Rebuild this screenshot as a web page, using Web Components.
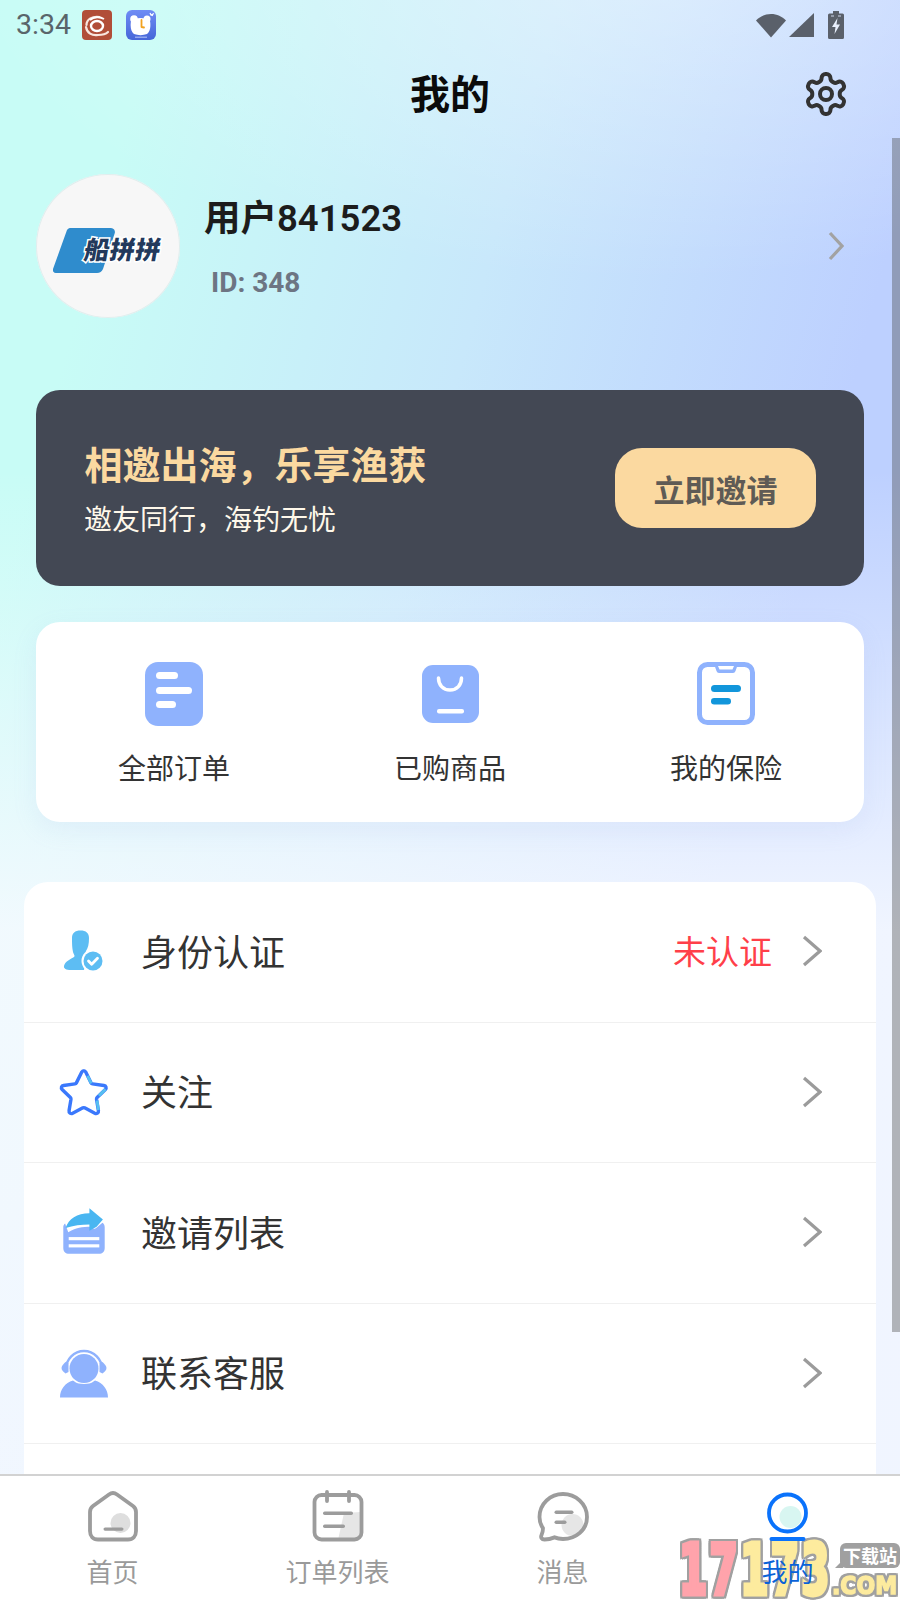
<!DOCTYPE html>
<html lang="zh-CN">
<head>
<meta charset="utf-8">
<title>我的</title>
<style>
html,body{margin:0;padding:0;background:#fff}
body{font-family:Roboto,"Noto Sans CJK SC",sans-serif;width:900px;height:1600px;overflow:hidden}
</style>
</head>
<body>
<app-root>
  <status-bar slot="top"></status-bar>
  <page-header slot="top">我的</page-header>
  <user-profile slot="top" name="用户841523" uid="ID: 348"></user-profile>
  <invite-banner slot="top" heading="相邀出海，乐享渔获" sub="邀友同行，海钓无忧" action="立即邀请"></invite-banner>
  <quick-card slot="top">
    <quick-item label="全部订单">
      <svg width="64" height="64" viewBox="0 0 64 64"><rect x="3" y="0" width="58" height="64" rx="13" fill="#8fb2fd"/><rect x="14" y="10" width="22" height="7" rx="3.5" fill="#fff"/><rect x="14" y="25" width="36" height="7" rx="3.5" fill="#fff"/><rect x="14" y="39" width="20" height="7" rx="3.5" fill="#fff"/></svg>
    </quick-item>
    <quick-item label="已购商品">
      <svg width="64" height="64" viewBox="0 0 64 64"><rect x="4" y="3" width="57" height="58" rx="11" fill="#8fb2fd"/><path d="M20.5 16c0 7 4.5 12 11.5 12s11.500-5 11.500-12" fill="none" stroke="#fff" stroke-width="3.500" stroke-linecap="round"/><rect x="19" y="47" width="27" height="4.500" rx="2" fill="#fff"/></svg>
    </quick-item>
    <quick-item label="我的保险">
      <svg width="64" height="64" viewBox="0 0 64 64"><rect x="5.500" y="2.500" width="53" height="58" rx="8" fill="#fff" stroke="#8fb2fd" stroke-width="5"/><path d="M20 2h24l-2.500 7a3 3 0 0 1-2.500 2H25a3 3 0 0 1-2.500-2z" fill="#8fb2fd"/><path d="M24 4h16l-1.500 3.500h-13z" fill="#fff"/><rect x="17" y="23" width="30" height="7" rx="3.500" fill="#1296db"/><rect x="17" y="36" width="20" height="6.500" rx="3.200" fill="#1296db"/></svg>
    </quick-item>
  </quick-card>
  <menu-list slot="top">
    <menu-row label="身份认证" status="未认证">
      <svg width="60" height="60" viewBox="0 0 60 60"><path d="M18 17c0-5 3-7.500 8.500-7.500S35 12 35 17c0 6-1 10-3 13-1 2-1 4 1 5l-3 14H17c-5 0-7.500-1.500-7-4 1-5 7-7 10-9 1.500-1-.5-3-1-5-1-4-1-9-1-14z" fill="#5dbdf3"/><circle cx="39" cy="40" r="11.500" fill="#fff"/><circle cx="39" cy="40" r="9.500" fill="#5dbdf3"/><path d="M34.500 40l3.200 3.300 5.800-6" fill="none" stroke="#fff" stroke-width="2.800" stroke-linecap="round" stroke-linejoin="round"/></svg>
    </menu-row>
    <menu-row label="关注">
      <svg width="60" height="60" viewBox="0 0 60 60"><g transform="translate(29.700 30) scale(.95) translate(-30 -29)"><path d="M30 6.500c1 0 1.800.8 2.400 1.900l5.400 11c.3.600.8 1 1.500 1.100l12 1.700c2.300.3 3 2.600 1.500 4.100l-8.700 8.500c-.5.500-.7 1.100-.6 1.800l2 12c.4 2.300-1.800 3.800-3.800 2.800l-10.700-5.700c-.6-.3-1.300-.3-1.900 0l-10.700 5.700c-2 1-4.200-.5-3.800-2.800l2-12c.1-.7-.1-1.300-.6-1.800l-8.700-8.500c-1.500-1.500-.8-3.800 1.500-4.100l12-1.700c.7-.1 1.200-.5 1.500-1.100l5.400-11c.6-1.100 1.400-1.900 2.400-1.900z" fill="none" stroke="#3a78fc" stroke-width="3.600"/><path d="M34 12l4 8M53 26l-7 7M44 38l1.500 10" fill="none" stroke="#56c0f0" stroke-width="3"/></g></svg>
    </menu-row>
    <menu-row label="邀请列表">
      <svg width="60" height="60" viewBox="0 0 60 60"><g transform="translate(30 29) scale(.9) translate(-30 -26.250)"><path d="M9 18c-1.500 1-2 2.500-2 4v23c0 4 2.500 6.500 6.500 6.500h33c4 0 6.500-2.500 6.500-6.500V22c0-2.500-1-4-2.500-5l-7 6c-1 1-2 1-3 .5l-3-2c-9 0-17 1-25 6z" fill="#8fb2fd"/><rect x="13" y="33" width="34" height="3.500" fill="#fff"/><rect x="13" y="41" width="34" height="3.500" fill="#fff"/><path d="M9.500 23C13 12 22 7 36 6.500V1l15 12.500-7 8-8 4.500v-7c-9 0-18 1-26.500 4z" fill="#49b6f1"/></g></svg>
    </menu-row>
    <menu-row label="联系客服">
      <svg width="60" height="60" viewBox="0 0 60 60"><path d="M12 26a18 18 0 0 1 36 0" fill="none" stroke="#8fb2fd" stroke-width="2.500"/><path d="M11.500 19c-2 2-4 4-4 6s2 4 4 5.500l3-1.500v-9z" fill="#8fb2fd"/><path d="M48.500 19c2 2 4 4 4 6s-2 4-4 5.500l-3-1.500v-9z" fill="#8fb2fd"/><circle cx="30" cy="25.500" r="14.500" fill="#8fb2fd"/><path d="M6 54.500c0-8 5-14.500 13-17 .5 0 2.500 3.500 11 3.500s10.500-3.500 11-3.500c8 2.500 13 9 13 17z" fill="#8fb2fd"/></svg>
    </menu-row>
    <menu-row label=""></menu-row>
  </menu-list>
  <tab-bar slot="bottom">
    <tab-item label="首页">
      <svg width="60" height="60" viewBox="0 0 60 60"><circle cx="37.500" cy="38" r="10" fill="#dedede"/><path d="M7 27c0-2.500 1-4.500 3-6L26 9.500c2.500-1.800 5.500-1.800 8 0L50 21c2 1.500 3 3.500 3 6v19c0 5-3 8.500-8 8.500H15c-5 0-8-3.500-8-8.500z" fill="none" stroke="#9c9c9c" stroke-width="3.800"/><rect x="20.500" y="42.500" width="20" height="3.200" rx="1.600" fill="#9c9c9c"/></svg>
    </tab-item>
    <tab-item label="订单列表">
      <svg width="60" height="60" viewBox="0 0 60 60"><path d="M36 28l17-1v22c0 3.500-2 6-5.500 6H30z" fill="#e6e6e6"/><rect x="6.500" y="10" width="47" height="44.500" rx="7" fill="none" stroke="#9c9c9c" stroke-width="3.800"/><path d="M19 7v9M41 7v9" stroke="#9c9c9c" stroke-width="3.800" stroke-linecap="round"/><rect x="15" y="26.500" width="30" height="3.500" rx="1.700" fill="#9c9c9c"/><rect x="15" y="39.500" width="22" height="3.500" rx="1.700" fill="#9c9c9c"/></svg>
    </tab-item>
    <tab-item label="消息">
      <svg width="60" height="60" viewBox="0 0 60 60"><circle cx="39.500" cy="40" r="11" fill="#e6e6e6"/><path transform="translate(0 9) scale(1 1.070) translate(0 -9)" d="M30 9c12.500 0 24 9 24 21.500S42.500 51 30 51c-3 0-6-.5-8.500-1.500-2.500 1-6 2-10 2-3 0-4-2-3-4 1-2 1.500-4 1.500-6.500C7.500 37.500 6.500 34 6.500 30.500 6.500 18 17.500 9 30 9z" fill="none" stroke="#9c9c9c" stroke-width="3.800" stroke-linejoin="round"/><rect x="21.500" y="25.500" width="19" height="3.500" rx="1.700" fill="#9c9c9c"/><rect x="21.500" y="35.500" width="12" height="3.500" rx="1.700" fill="#9c9c9c"/></svg>
    </tab-item>
    <tab-item label="我的" active>
      <svg width="60" height="60" viewBox="0 0 60 60"><circle cx="32.500" cy="32" r="11" fill="#d8f6f1"/><circle cx="29.500" cy="28" r="18.500" fill="none" stroke="#0a72fb" stroke-width="3.800"/><rect x="11.500" y="52" width="36" height="4" rx="2" fill="#0a72fb"/></svg>
    </tab-item>
    <water-mark></water-mark>
  </tab-bar>
</app-root>
<script>
function comp(tag, css, html, setup) {
  customElements.define(tag, class extends HTMLElement {
    connectedCallback() {
      if (this.shadowRoot) return;
      const r = this.attachShadow({mode:'open'});
      r.innerHTML = '<style>' + css + '</style>' + (typeof html === 'function' ? html(this) : html);
      if (setup) setup(this, r);
    }
  });
}
const chevron = (w,h,c,sw) => `<svg width="${w}" height="${h}" viewBox="0 0 ${w} ${h}"><path d="M2 2L${w-2} ${h/2}L2 ${h-2}" fill="none" stroke="${c}" stroke-width="${sw}"/></svg>`;

comp('app-root', `
  :host{display:flex;flex-direction:column;width:900px;height:1600px;position:relative;overflow:hidden;color:#333;
    background:
      linear-gradient(to bottom, rgba(247,250,255,0) 470px, rgba(247,250,255,.88) 930px, rgba(243,247,255,.95) 1500px),
      radial-gradient(ellipse 680px 320px at 72% -40px, rgba(255,255,255,.42), rgba(255,255,255,0)),
      linear-gradient(105deg, #c8fcf6 12%, #c8e8fb 42%, #bdd0ff 72%);}
  .main{flex:1;min-height:0;overflow:hidden;display:flex;flex-direction:column}
  .thumb{position:absolute;left:892px;top:138px;width:8px;height:1194px;background:rgba(70,70,70,.38)}
`, `<div class="main"><slot name="top"></slot></div><slot name="bottom"></slot><div class="thumb"></div>`);

comp('status-bar', `
  :host{display:flex;align-items:center;height:50px;flex:none;padding:0 56px 0 16px;box-sizing:border-box}
  .t{font:400 28.500px/50px Roboto,sans-serif;color:#59656a;width:66px}
  svg{display:block}
  .n{display:flex;gap:14px;margin-top:0}
  .r{margin-left:auto;display:flex;align-items:center}
`, `<span class="t">3:34</span>
  <div class="n">
    <svg width="30" height="30" viewBox="0 0 30 30"><rect width="30" height="30" rx="4" fill="#b14e38"/><ellipse cx="15" cy="16" rx="6" ry="5" fill="none" stroke="#fff" stroke-width="2.400"/><path d="M4.500 15c0-6 6-9 13-8M4 17c1 6 6 9 12 8 3 0 8-1 10-3" fill="none" stroke="#f8e6df" stroke-width="2.200" stroke-linecap="round"/><path d="M8 10c4-3.500 10-3.500 14-1" fill="none" stroke="#fff" stroke-width="1.800"/></svg>
    <svg width="30" height="30" viewBox="0 0 30 30"><defs><linearGradient id="bl" x1="0" y1="0" x2="0" y2="1"><stop offset="0" stop-color="#6f8cf5"/><stop offset="1" stop-color="#4666d8"/></linearGradient></defs><rect width="30" height="30" rx="6" fill="url(#bl)"/><circle cx="8" cy="9" r="3.800" fill="#fff"/><circle cx="21" cy="9" r="3.500" fill="#fff"/><path d="M5 11c4-4 15-4 19 0 1 5 0 11-3 13-4 1.500-9 1.500-13 0-3-2-4-8-3-13z" fill="#fff"/><path d="M15.500 10v7l2.500.5" fill="none" stroke="#f2a21f" stroke-width="1.800" stroke-linecap="round" stroke-linejoin="round"/><path d="M24 3l1 2 2-1-1 2" fill="none" stroke="#fff" stroke-width="1.200"/><rect x="9" y="26.500" width="12" height="1.500" fill="#93a8f0"/></svg>
  </div>
  <div class="r">
    <svg width="30" height="26" viewBox="0 0 30 26" style="margin-right:3px"><path d="M0 8.500C4 4.500 9 2 15 2s11 2.500 15 6.500L15 25.500z" fill="#5a606a"/></svg>
    <svg width="25" height="26" viewBox="0 0 25 26" style="margin-right:14px"><path d="M25 1v24H0z" fill="#5a606a"/></svg>
    <svg width="16" height="28" viewBox="0 0 16 28"><path d="M5 0h6v2.500h3.500a1.500 1.500 0 0 1 1.500 1.500v22.500a1.500 1.500 0 0 1-1.500 1.500H1.500A1.500 1.500 0 0 1 0 26.500V4a1.500 1.500 0 0 1 1.500-1.500H5z" fill="#5a606a"/><path d="M9.500 7L4 16h3.500l-1 7L12 13.500H8.500z" fill="#e8effc"/><path d="M3 5h3M10 5h3" stroke="#cfd8ee" stroke-width="1"/></svg>
  </div>`);

comp('page-header', `
  :host{display:grid;grid-template-columns:1fr auto 1fr;align-items:center;height:88px;flex:none;box-sizing:border-box;padding:0 50px 0 0}
  .t{font:700 40px/1 "Noto Sans CJK SC",sans-serif;color:#0b0b0b;grid-column:2;margin:0 0 4px 50px}
  .g{justify-self:end;display:block}
`, `<div class="t"><slot></slot></div>
  <svg class="g" width="48" height="48" viewBox="0 0 24 24" fill="none" stroke="#333" stroke-width="2"><path d="M12.220 2h-.44a2 2 0 0 0-2 2v.18a2 2 0 0 1-1 1.730l-.43.25a2 2 0 0 1-2 0l-.15-.08a2 2 0 0 0-2.730.73l-.22.38a2 2 0 0 0 .73 2.730l.15.1a2 2 0 0 1 1 1.720v.51a2 2 0 0 1-1 1.740l-.15.09a2 2 0 0 0-.73 2.730l.22.38a2 2 0 0 0 2.730.73l.15-.08a2 2 0 0 1 2 0l.43.25a2 2 0 0 1 1 1.730V20a2 2 0 0 0 2 2h.44a2 2 0 0 0 2-2v-.18a2 2 0 0 1 1-1.730l.43-.25a2 2 0 0 1 2 0l.15.08a2 2 0 0 0 2.730-.73l.22-.39a2 2 0 0 0-.73-2.730l-.15-.08a2 2 0 0 1-1-1.740v-.5a2 2 0 0 1 1-1.740l.15-.09a2 2 0 0 0 .73-2.730l-.22-.38a2 2 0 0 0-2.730-.73l-.15.08a2 2 0 0 1-2 0l-.43-.25a2 2 0 0 1-1-1.730V4a2 2 0 0 0-2-2z"/><circle cx="12" cy="12" r="3"/></svg>`);

comp('user-profile', `
  :host{display:flex;align-items:center;flex:none;margin-top:36px;padding:0 56px 0 36px;height:144px}
  .a{width:144px;height:144px;border-radius:50%;background:#f7f7f7;box-shadow:inset 0 0 0 1px #e0eeee;position:relative;flex:none}
  .a svg{position:absolute;left:17px;top:54px}
  .lg{position:absolute;left:49px;top:52px;font:900 25px/44px "Noto Sans CJK SC",sans-serif;color:#23395c;-webkit-text-stroke:3px #fff;paint-order:stroke fill;letter-spacing:.5px;white-space:nowrap;transform:skewX(-10deg)}
  .i{margin-left:24px;flex:1}
  .n{font:600 36.500px/44px Roboto,"Noto Sans CJK SC",sans-serif;color:#1c1c1c;margin-top:5px}
  .d{font:700 28px/36px Roboto,sans-serif;color:#6d7583;margin:24px 0 0 7px}
`, h => `<div class="a"><svg width="62" height="46" viewBox="0 0 62 46"><path d="M14 2a4 4 0 0 1 4-2h40a4 4 0 0 1 3.800 5L50 41a7 7 0 0 1-6 4H3a3 3 0 0 1-3-4z" fill="#2f8ccd"/></svg><span class="lg">船拼拼</span></div>
  <div class="i"><div class="n">${h.getAttribute('name')}</div><div class="d">${h.getAttribute('uid')}</div></div>
  ${chevron(16,30,'#a2a2a2',3.200)}`);

comp('invite-banner', `
  :host{display:flex;align-items:center;justify-content:space-between;flex:none;box-sizing:border-box;margin:72px 36px 0;height:196px;background:#434854;border-radius:24px;padding:0 48px 0 49px;font-family:"Noto Sans CJK SC",sans-serif}
  .h{font-weight:700;font-size:38px;line-height:50px;color:#fbd9a0;margin-left:-.5px;white-space:nowrap}
  .s{font-size:28px;line-height:40px;color:#fff8ea;margin-top:10px;margin-left:-1px;white-space:nowrap}
  .b{width:201px;height:80px;border-radius:27px;background:#fbd9a0;color:#5f5b55;font-weight:700;font-size:31px;display:flex;align-items:center;justify-content:center}
`, h => `<div class="t"><div class="h">${h.getAttribute('heading')}</div><div class="s">${h.getAttribute('sub')}</div></div><div class="b">${h.getAttribute('action')}</div>`);

comp('quick-card', `
  :host{display:grid;grid-template-columns:repeat(3,1fr);flex:none;margin:36px 36px 0;height:200px;background:#fff;border-radius:24px;box-shadow:0 8px 24px rgba(150,170,220,.12)}
`, `<slot></slot>`);

comp('quick-item', `
  :host{display:flex;flex-direction:column;align-items:center;padding-top:40px;font-family:"Noto Sans CJK SC",sans-serif}
  ::slotted(svg){display:block}
  .l{font-size:28px;line-height:40px;color:#333;margin-top:21px}
`, h => `<slot></slot><div class="l">${h.getAttribute('label')}</div>`);

comp('menu-list', `
  :host{display:block;flex:none;margin:60px 24px 0;background:#fff;border-radius:24px 24px 0 0}
`, `<slot></slot>`);

comp('menu-row', `
  :host{display:flex;align-items:center;height:140.500px;box-sizing:border-box;border-bottom:1px solid #f0f0f0;padding:0 54px 1px 30px;font-family:"Noto Sans CJK SC",sans-serif}
  .w{display:flex;align-items:center;flex:1}
  ::slotted(svg){display:block;flex:none}
  .ic{width:60px;height:60px;flex:none;margin-right:27px}
  .l{font-size:36px;line-height:44px;color:#333;flex:1;margin-bottom:3px}
  .s{font-size:33px;line-height:44px;color:#ff3f49;margin:0 30px 3px 0}
`, h => { const s=h.getAttribute('status'); return `<div class="w"><div class="ic"><slot></slot></div><div class="l">${h.getAttribute('label')}</div>${s?`<div class="s">${s}</div>`:''}${h.getAttribute('label')?chevron(20,32,'#9b9b9b',3.200):''}</div>`; });

comp('tab-bar', `
  :host{display:grid;grid-template-columns:repeat(4,1fr);flex:none;height:126px;box-sizing:border-box;background:#fff;border-top:2px solid #d2d2d2;position:relative;overflow:hidden}
`, `<slot></slot>`);

comp('tab-item', `
  :host{display:flex;flex-direction:column;align-items:center;font-family:"Noto Sans CJK SC",sans-serif;padding-top:9px;position:relative;z-index:1}
  ::slotted(svg){display:block}
  .l{font-size:26px;line-height:36px;color:#9a9a9a;margin-top:8px}
  :host([active]) .l{color:#0a62d8}
`, h => `<slot></slot><div class="l">${h.getAttribute('label')}</div>`);

comp('water-mark', `
  :host{position:absolute;left:675px;top:63px;width:225px;height:61px;display:block;z-index:0}
  .o{position:absolute;inset:0;filter:drop-shadow(2px 0 0 #a0a0a0) drop-shadow(-2px 0 0 #a0a0a0) drop-shadow(0 2px 0 #a0a0a0) drop-shadow(0 -2px 0 #a0a0a0)}
  .d{position:absolute;left:4px;top:1px;font:700 70px/60px "DejaVu Sans",sans-serif;letter-spacing:4px;transform:scaleX(.58);transform-origin:0 0;white-space:nowrap}
  .p{color:#ffa3ab;-webkit-text-stroke:5px #ffa3ab}.y{color:#fdeb9e;-webkit-text-stroke:5px #fdeb9e}
  .b{position:absolute;left:165px;top:4px;width:60px;height:25px;background:#a0a0a0;border-radius:6px;color:#fff;font:700 18px/25px "Noto Sans CJK SC",sans-serif;text-align:center}
  .b:before{content:"";position:absolute;left:-5px;bottom:0;width:0;height:0;border-style:solid;border-width:0 0 8px 8px;border-color:transparent transparent #a0a0a0 transparent}
  .c{position:absolute;left:157px;top:33px;font:700 25px/28px "DejaVu Sans",sans-serif;color:#fdeb9e;-webkit-text-stroke:1.500px #fdeb9e;white-space:nowrap;transform:scaleX(.88);transform-origin:0 0}
`, `<div class="o"><div class="d"><span class="p">17</span><span class="y">173</span></div><div class="c">.COM</div></div><div class="b">下载站</div>`);
</script>
</body>
</html>
